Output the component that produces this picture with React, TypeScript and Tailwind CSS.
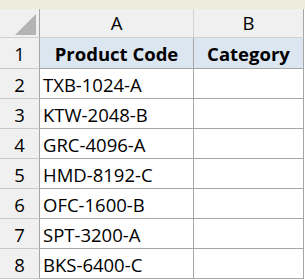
const rows = [
  'TXB-1024-A',
  'KTW-2048-B',
  'GRC-4096-A',
  'HMD-8192-C',
  'OFC-1600-B',
  'SPT-3200-A',
  'BKS-6400-C',
]

const font = { fontFamily: '"Open Sans", "Liberation Sans", sans-serif' }

const App = () => (
  <div className="h-[280px] w-[305px] overflow-hidden bg-white text-[18.5px] text-black" style={font}>
    <div className="h-[9px] bg-[#eeecdc]" />
    <div className="grid grid-cols-[40px_154px_110px]">
      {/* column headers */}
      <div className="relative h-[29px] border-r border-b border-r-[#a6a6a6] border-b-[#d0d0d0] bg-[#f0f0f0]">
        <svg className="absolute left-[15px] top-[5px]" width="21" height="21" viewBox="0 0 21 21">
          <polygon points="21,0 21,21 0,21" fill="#b4b4b4" />
        </svg>
      </div>
      <div className="flex h-[29px] items-center justify-center border-r border-b border-r-[#d4d4d4] border-b-[#d0d0d0] bg-[#f0f0f0] leading-none">
        A
      </div>
      <div className="flex h-[29px] items-center justify-center border-r border-b border-r-[#a6a6a6] border-b-[#d0d0d0] bg-[#f0f0f0] leading-none">
        B
      </div>

      {/* row 1 */}
      <div className="flex h-[31px] items-center justify-center border-r border-b border-r-[#a6a6a6] border-b-[#c8c8c8] bg-[#f0f0f0] pt-[2px]">
        1
      </div>
      <div className="flex h-[31px] items-center justify-center border-r border-b border-[#a6a6a6] bg-[#dce6f1] pt-[2px] font-bold">
        Product Code
      </div>
      <div className="flex h-[31px] items-center justify-center border-r border-b border-[#a6a6a6] bg-[#dce6f1] pt-[2px] font-bold">
        Category
      </div>

      {rows.map((code, i) => (
        <div key={code} className="contents">
          <div className="flex h-[30px] items-center justify-center border-r border-b border-r-[#a6a6a6] border-b-[#c8c8c8] bg-[#f0f0f0] pt-[2px]">
            {i + 2}
          </div>
          <div className="flex h-[30px] items-center border-r border-b border-[#a6a6a6] pl-[3px] pt-[2px]">
            {code}
          </div>
          <div className="h-[30px] border-r border-b border-[#a6a6a6]" />
        </div>
      ))}
    </div>
  </div>
)

export default App
